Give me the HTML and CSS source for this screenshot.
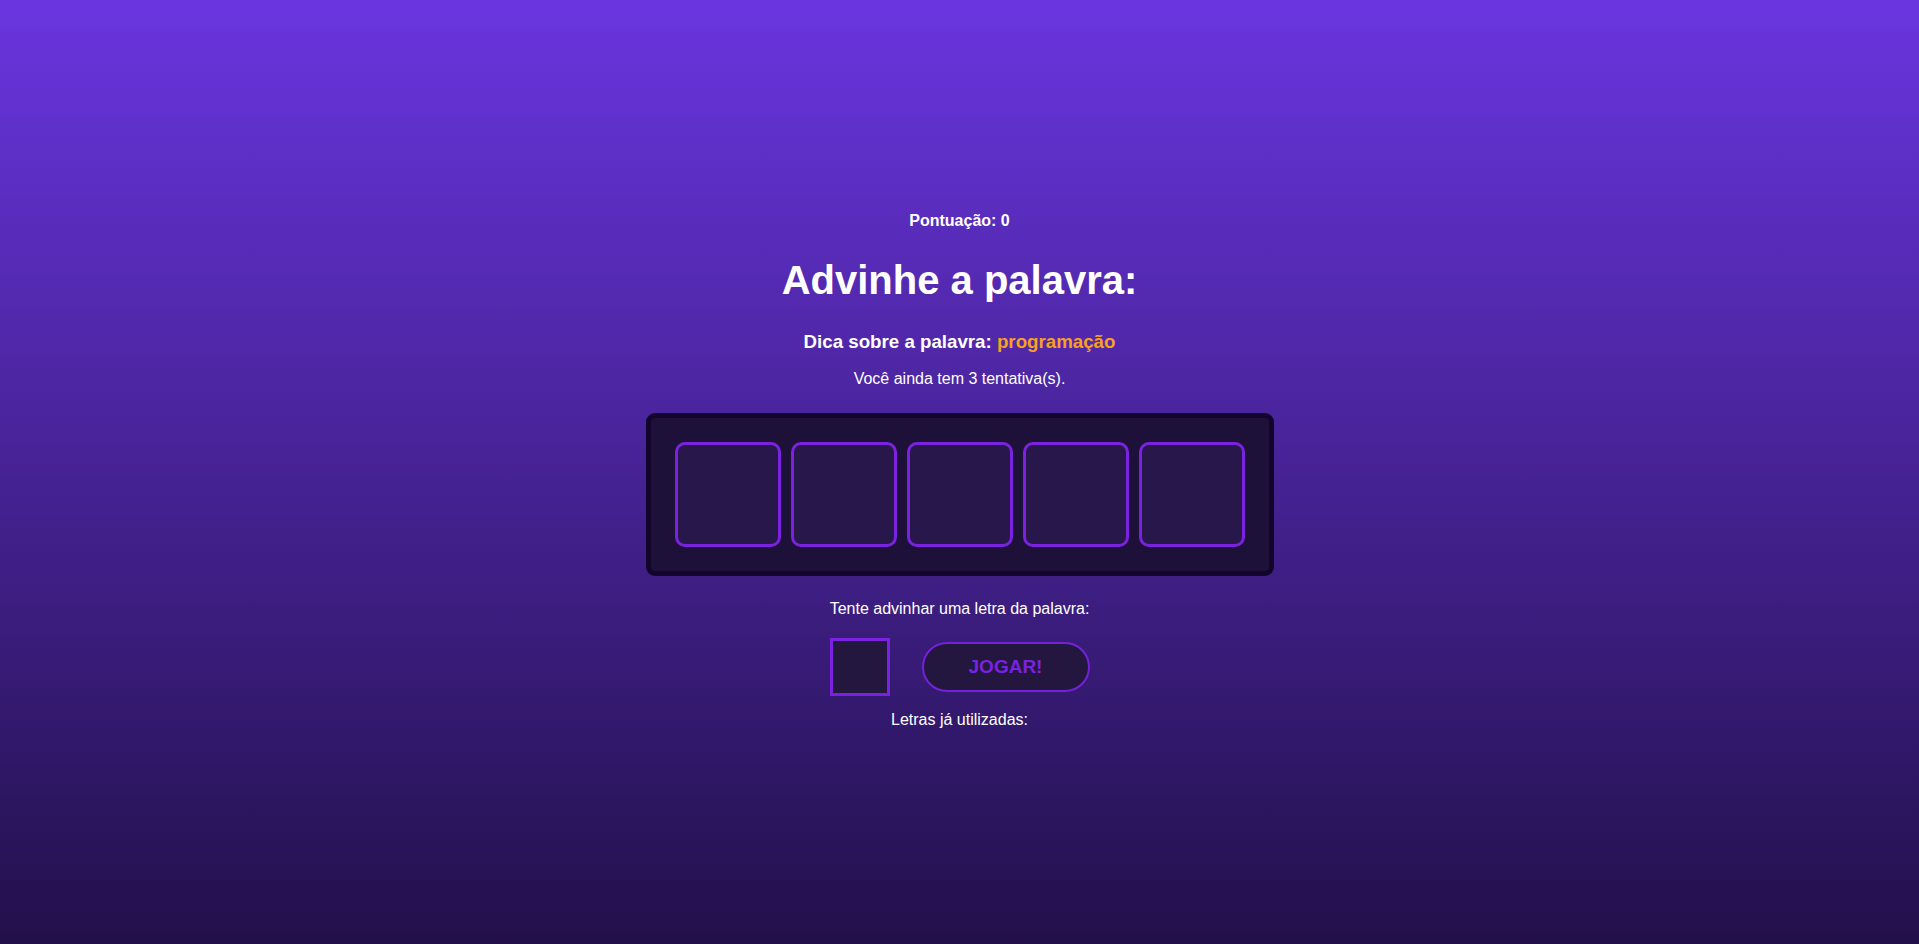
FILE: index.html
```html
<!DOCTYPE html>
<html lang="pt-BR">
<head>
<meta charset="UTF-8">
<title>Advinhe a palavra</title>
<link rel="stylesheet" href="styles.css">
</head>
<body>
<main class="game">
  <h4 class="score">Pontuação: 0</h4>
  <h1 class="title">Advinhe a palavra:</h1>
  <h3 class="hint">Dica sobre a palavra: <span class="hint-word">programação</span></h3>
  <p class="tries">Você ainda tem 3 tentativa(s).</p>
  <div class="word-board">
    <div class="letter-box"></div>
    <div class="letter-box"></div>
    <div class="letter-box"></div>
    <div class="letter-box"></div>
    <div class="letter-box"></div>
  </div>
  <p class="guess-label">Tente advinhar uma letra da palavra:</p>
  <form class="guess-row" onsubmit="return false;">
    <input class="guess-input" type="text" maxlength="1">
    <button class="play-btn" type="submit">JOGAR!</button>
  </form>
  <p class="used-letters">Letras já utilizadas:</p>
</main>
</body>
</html>
```

FILE: styles.css
```css
html, body {
  margin: 0;
  padding: 0;
  height: 100%;
}

body {
  background: linear-gradient(to bottom, #6a35df 0%, #22104a 100%);
  color: #ffffff;
  font-family: "Liberation Sans", Arial, sans-serif;
}

.game {
  min-height: 100vh;
  display: flex;
  flex-direction: column;
  align-items: center;
  justify-content: center;
  text-align: center;
  box-sizing: border-box;
  padding-bottom: 3px;
}

.score {
  margin: 0;
  font-size: 16px;
  font-weight: 700;
  line-height: 18.4px;
}

.title {
  margin: 27px 0 0;
  font-size: 40px;
  font-weight: 700;
  line-height: 46px;
}

.hint {
  margin: 28px 0 0;
  font-size: 18.72px;
  font-weight: 700;
  line-height: 21.5px;
}

.hint-word {
  color: #f8a023;
}

.tries {
  margin: 17px 0 0;
  font-size: 16px;
  line-height: 18.4px;
}

.word-board {
  margin-top: 25px;
  display: flex;
  gap: 10px;
  padding: 24px;
  background: #1d1039;
  border: 5px solid #12052b;
  border-radius: 9px;
}

.letter-box {
  width: 106px;
  height: 105px;
  box-sizing: border-box;
  border: 3px solid #7b22e0;
  border-radius: 10px;
  background: #28174a;
}

.guess-label {
  margin: 24px 0 0;
  font-size: 16px;
  line-height: 18.4px;
}

.guess-row {
  margin: 19px 0 0;
  display: flex;
  align-items: center;
  gap: 32px;
}

.guess-input {
  width: 60px;
  height: 58px;
  box-sizing: border-box;
  border: 3px solid #7b22e0;
  background: #24173f;
  color: #ffffff;
  font-family: inherit;
  font-size: 24px;
  text-align: center;
  outline: none;
  padding: 0;
}

.play-btn {
  width: 168px;
  height: 50px;
  box-sizing: border-box;
  border: 2px solid #7322d8;
  border-radius: 25px;
  background: #24173f;
  color: #7a22e0;
  font-family: inherit;
  font-size: 19px;
  font-weight: 700;
  cursor: pointer;
  padding: 0;
}

.used-letters {
  margin: 15px 0 0;
  font-size: 16px;
  line-height: 18.4px;
}
```
